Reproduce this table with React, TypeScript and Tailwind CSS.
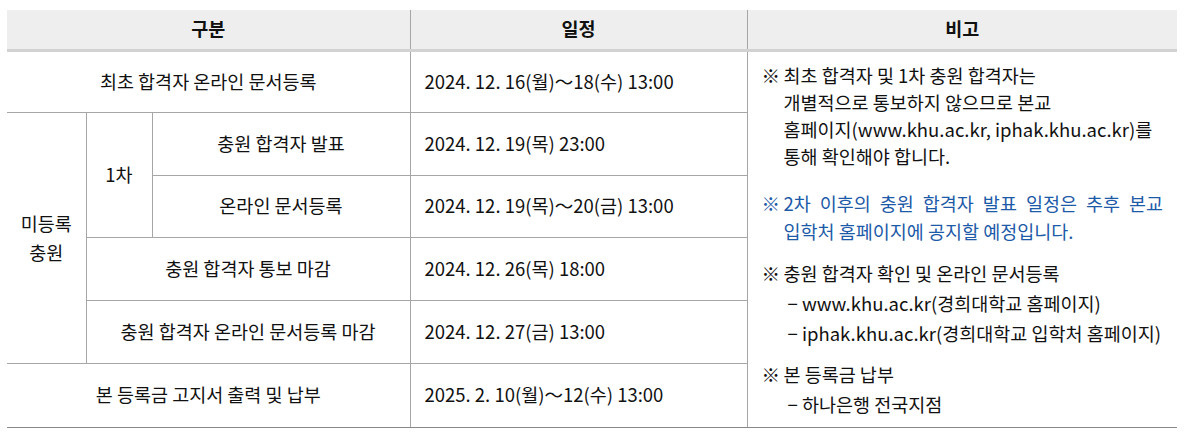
import React from "react";

const cell = "border-b border-r border-[#a6a6a6] text-center align-middle";
const dateCell = "border-b border-r border-[#a6a6a6] pl-[14px] text-left align-middle";

function Note({ children, className = "" }: { children: React.ReactNode; className?: string }) {
  return (
    <div className={`flex ${className}`}>
      <span className="w-[22px] shrink-0">※</span>
      <div className="flex-1">{children}</div>
    </div>
  );
}

export default function App() {
  return (
    <div
      className="w-[1187px] h-[435px] bg-white pt-[10px] pl-[7px] text-[18.5px] text-[#111]"
      style={{ fontFamily: '"Noto Sans CJK KR", "Noto Sans", sans-serif' }}
    >
      <table className="table-fixed border-collapse w-[1170px]">
        <colgroup>
          <col className="w-[79px]" />
          <col className="w-[66px]" />
          <col className="w-[258px]" />
          <col className="w-[337px]" />
          <col className="w-[430px]" />
        </colgroup>
        <thead>
          <tr className="h-[40px] bg-[#eeeeee]">
            <th colSpan={3} className="border-r border-b-[3px] border-r-[#a6a6a6] border-b-[#d2d2d2] font-bold">
              구분
            </th>
            <th className="border-r border-b-[3px] border-r-[#a6a6a6] border-b-[#d2d2d2] font-bold">
              일정
            </th>
            <th className="border-b-[3px] border-b-[#d2d2d2] font-bold">비고</th>
          </tr>
        </thead>
        <tbody>
          <tr className="h-[62px]">
            <td colSpan={3} className={cell}>
              최초 합격자 온라인 문서등록
            </td>
            <td className={dateCell}>2024. 12. 16(월)～18(수) 13:00</td>
            <td rowSpan={6} className="border-b border-[#888] align-top pl-[14px] pr-[14px] pt-[10px]">
              <Note className="leading-[27px]">
                최초 합격자 및 1차 충원 합격자는
                <br />
                개별적으로 통보하지 않으므로 본교
                <br />
                홈페이지(www.khu.ac.kr, iphak.khu.ac.kr)를
                <br />
                통해 확인해야 합니다.
              </Note>
              <Note className="mt-[19px] leading-[28px] text-[#1d5aa8]">
                <div className="text-justify [text-align-last:justify]">
                  2차 이후의 충원 합격자 발표 일정은 추후 본교
                </div>
                <div>입학처 홈페이지에 공지할 예정입니다.</div>
              </Note>
              <div className="mt-[13px] leading-[30px]">
                <Note>충원 합격자 확인 및 온라인 문서등록</Note>
                <div className="pl-[26px]">− www.khu.ac.kr(경희대학교 홈페이지)</div>
                <div className="pl-[26px]">− iphak.khu.ac.kr(경희대학교 입학처 홈페이지)</div>
              </div>
              <div className="mt-[11px] leading-[30px]">
                <Note>본 등록금 납부</Note>
                <div className="pl-[26px]">− 하나은행 전국지점</div>
              </div>
            </td>
          </tr>
          <tr className="h-[63px]">
            <td rowSpan={4} className={`${cell} leading-[29px]`}>
              미등록
              <br />
              충원
            </td>
            <td rowSpan={2} className={cell}>
              1차
            </td>
            <td className={cell}>충원 합격자 발표</td>
            <td className={dateCell}>2024. 12. 19(목) 23:00</td>
          </tr>
          <tr className="h-[62px]">
            <td className={cell}>온라인 문서등록</td>
            <td className={dateCell}>2024. 12. 19(목)～20(금) 13:00</td>
          </tr>
          <tr className="h-[63px]">
            <td colSpan={2} className={cell}>
              충원 합격자 통보 마감
            </td>
            <td className={dateCell}>2024. 12. 26(목) 18:00</td>
          </tr>
          <tr className="h-[63px]">
            <td colSpan={2} className={cell}>
              충원 합격자 온라인 문서등록 마감
            </td>
            <td className={dateCell}>2024. 12. 27(금) 13:00</td>
          </tr>
          <tr className="h-[64px]">
            <td colSpan={3} className="border-b border-r border-b-[#888] border-r-[#a6a6a6] text-center align-middle">
              본 등록금 고지서 출력 및 납부
            </td>
            <td className="border-b border-r border-b-[#888] border-r-[#a6a6a6] pl-[14px] text-left align-middle">
              2025. 2. 10(월)～12(수) 13:00
            </td>
          </tr>
        </tbody>
      </table>
    </div>
  );
}
